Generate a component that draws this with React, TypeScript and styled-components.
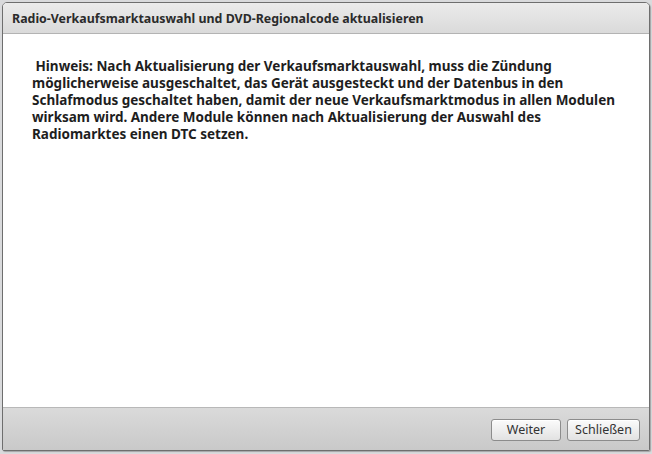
import React from "react";
import styled, { createGlobalStyle } from "styled-components";

const Global = createGlobalStyle`
  html, body { margin: 0; padding: 0; }
  body {
    width: 652px;
    height: 454px;
    background: #d9dadc;
    font-family: "Noto Sans", "DejaVu Sans", sans-serif;
    overflow: hidden;
  }
`;

const Screen = styled.div`
  width: 652px;
  height: 454px;
  box-sizing: border-box;
  padding: 2px 2px 3px 2px;
  display: flex;
`;

const Window = styled.div`
  flex: 1;
  display: flex;
  flex-direction: column;
  border: 1px solid #6e6e6e;
  border-radius: 5px 5px 2px 2px;
  overflow: hidden;
  background: #ffffff;
  box-shadow: 1px 1px 1px rgba(0, 0, 0, 0.25);
`;

const TitleBar = styled.div`
  height: 30px;
  flex: none;
  display: flex;
  align-items: center;
  padding-left: 9px;
  background: linear-gradient(#ebebeb, #dadada);
  border-bottom: 1px solid #b3b3b3;
  font-size: 12.4px;
  font-weight: 700;
  color: #2b2b2b;
`;

const Content = styled.div`
  flex: 1;
  padding: 24px 20px 0 29px;
  font-size: 13.5px;
  font-weight: 700;
  line-height: 17px;
  color: #1e1e1e;
  white-space: pre;
`;

const Footer = styled.div`
  height: 43px;
  flex: none;
  display: flex;
  justify-content: flex-end;
  align-items: center;
  gap: 6px;
  padding-right: 9px;
  padding-top: 1px;
  box-sizing: border-box;
  background: linear-gradient(#dadada, #c9c9c9);
  border-top: 1px solid #b8b8b8;
`;

const Button = styled.button<{ $w: number }>`
  width: ${(p) => p.$w}px;
  height: 22px;
  padding: 0;
  border: 1px solid #8c8c8c;
  border-radius: 3px;
  background: linear-gradient(#fbfbfb, #e2e2e2);
  font-family: "Noto Sans", "DejaVu Sans", sans-serif;
  font-size: 12.5px;
  color: #333;
  box-shadow: inset 0 1px 0 #fff;
`;

export default function App() {
  return (
    <>
      <Global />
      <Screen>
        <Window>
          <TitleBar>Radio-Verkaufsmarktauswahl und DVD-Regionalcode aktualisieren</TitleBar>
          <Content>
            {" Hinweis: Nach Aktualisierung der Verkaufsmarktauswahl, muss die Zündung\n"}
            {"möglicherweise ausgeschaltet, das Gerät ausgesteckt und der Datenbus in den\n"}
            {"Schlafmodus geschaltet haben, damit der neue Verkaufsmarktmodus in allen Modulen\n"}
            {"wirksam wird. Andere Module können nach Aktualisierung der Auswahl des\n"}
            {"Radiomarktes einen DTC setzen."}
          </Content>
          <Footer>
            <Button $w={70}>Weiter</Button>
            <Button $w={73}>Schließen</Button>
          </Footer>
        </Window>
      </Screen>
    </>
  );
}
